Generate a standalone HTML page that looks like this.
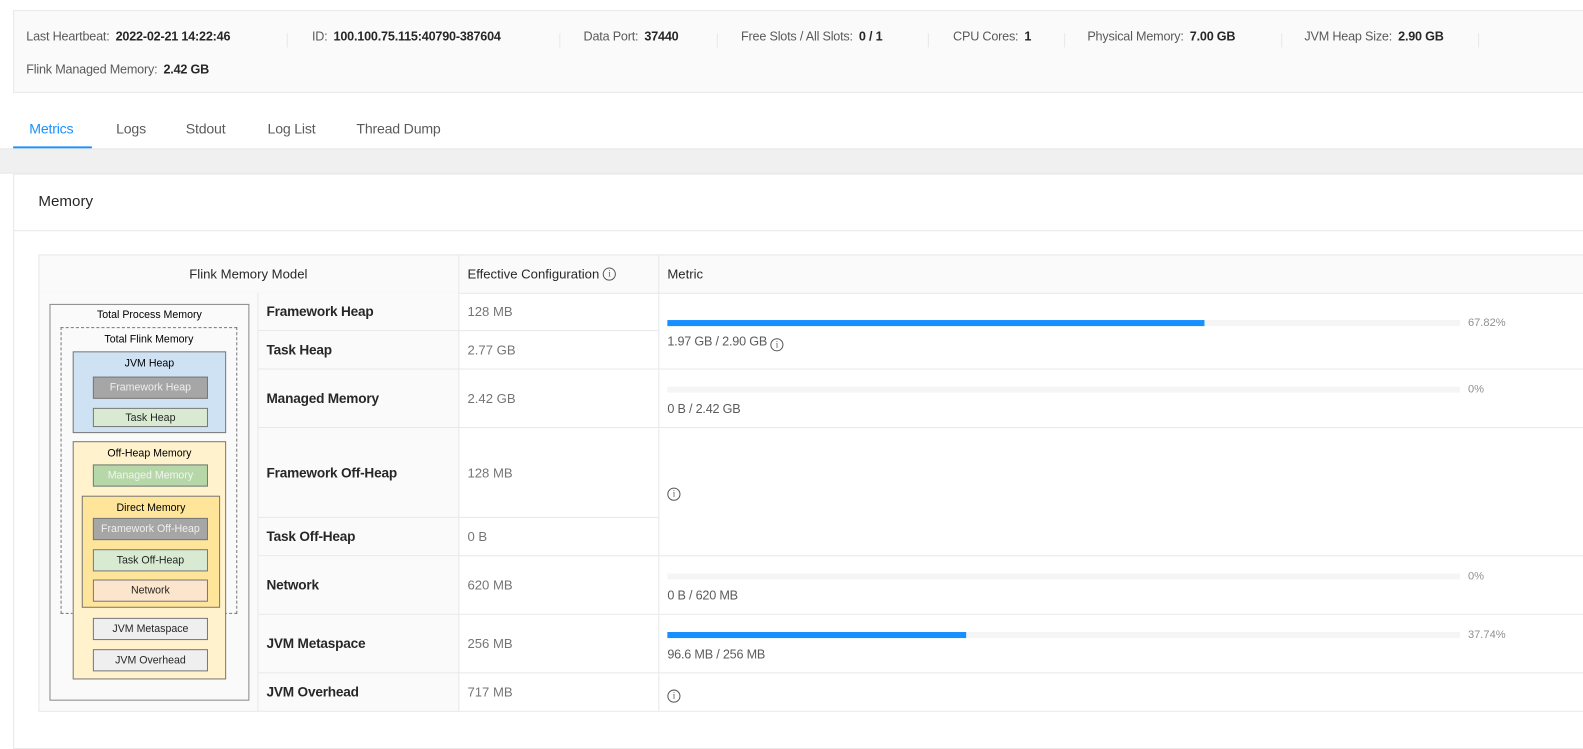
<!DOCTYPE html>
<html><head><meta charset="utf-8"><style>
*{box-sizing:border-box;margin:0;padding:0}
body{width:1583px;height:733px;overflow:hidden;background:#fff;font-family:"Liberation Sans",sans-serif;color:rgba(0,0,0,.85);position:relative;font-size:13px}
#w{position:absolute;left:0;top:0;width:1568px;height:726px;transform:scale(1.0096);transform-origin:0 0}
.a{position:absolute}
.hdr{left:13px;top:10px;width:1580px;height:82px;background:#fafafa;border:1px solid #e8e8e8}
.it{position:absolute;top:18px;font-size:12.5px;color:rgba(0,0,0,.65);white-space:nowrap;letter-spacing:-.2px}
.it b{color:rgba(0,0,0,.85);margin-left:6px}
.sep{position:absolute;top:22px;width:1px;height:14px;background:#e8e8e8}
.tab{position:absolute;top:119px;font-size:14px;color:rgba(0,0,0,.65);letter-spacing:-.2px}
.cell{position:absolute;border-bottom:1px solid #e8e8e8;border-right:1px solid #e8e8e8;display:flex;align-items:center;padding-left:8px}
.nm{background:#fafafa;font-weight:bold;font-size:13.5px;color:rgba(0,0,0,.85);letter-spacing:-.2px}
.cf{color:rgba(0,0,0,.55);font-size:13px}
.bx{position:absolute;text-align:center;font-size:10.5px;color:#000;font-family:"Liberation Sans",sans-serif}
.sb{position:absolute;left:92px;width:114px;height:22px;border:1px solid #777;font-size:10.5px;display:flex;align-items:center;justify-content:center;font-family:"Liberation Sans",sans-serif}
.bar{position:absolute;left:661px;width:785px;height:6px;background:#f5f5f5}
.bar i{position:absolute;left:0;top:0;height:6px;background:#1890ff}
.pct{position:absolute;left:1454px;font-size:11px;color:rgba(0,0,0,.45)}
.mt{position:absolute;left:661px;font-size:12.5px;color:rgba(0,0,0,.65);letter-spacing:-.2px}
.ic{display:inline-block;width:13px;height:13px;border:1.2px solid #555;border-radius:50%;font-size:9px;line-height:11px;text-align:center;color:#555;vertical-align:-2px;font-family:"Liberation Serif",serif}
</style></head><body><div id="w">
<div class="a hdr">
<div class="it" style="left:12px">Last Heartbeat:<b>2022-02-21 14:22:46</b></div>
<div class="sep" style="left:270px"></div>
<div class="it" style="left:295px">ID:<b>100.100.75.115:40790-387604</b></div>
<div class="sep" style="left:540px"></div>
<div class="it" style="left:564px">Data Port:<b>37440</b></div>
<div class="sep" style="left:696px"></div>
<div class="it" style="left:720px">Free Slots / All Slots:<b>0 / 1</b></div>
<div class="sep" style="left:905px"></div>
<div class="it" style="left:930px">CPU Cores:<b>1</b></div>
<div class="sep" style="left:1040px"></div>
<div class="it" style="left:1063px">Physical Memory:<b>7.00 GB</b></div>
<div class="sep" style="left:1255px"></div>
<div class="it" style="left:1278px">JVM Heap Size:<b>2.90 GB</b></div>
<div class="sep" style="left:1450px"></div>
<div class="it" style="left:12px;top:51px">Flink Managed Memory:<b>2.42 GB</b></div>
</div>
<div class="tab" style="left:29px;color:#1890ff">Metrics</div>
<div class="tab" style="left:115px">Logs</div>
<div class="tab" style="left:184px">Stdout</div>
<div class="tab" style="left:265px">Log List</div>
<div class="tab" style="left:353px">Thread Dump</div>
<div class="a" style="left:13px;top:145px;width:78px;height:2px;background:#1890ff"></div>
<div class="a" style="left:0;top:147px;width:1583px;height:25px;background:#f0f0f0;border-top:1px solid #e8e8e8;border-bottom:1px solid #e8e8e8"></div>
<div class="a" style="left:13px;top:172px;width:1580px;height:570px;border:1px solid #e8e8e8;background:#fff"></div>
<div class="a" style="left:38px;top:191px;font-size:15px;color:rgba(0,0,0,.85)">Memory</div>
<div class="a" style="left:14px;top:228px;width:1570px;height:1px;background:#e8e8e8"></div>

<div class="a" style="left:38px;top:252px;width:1545px;height:39px;background:#fafafa;border-top:1px solid #e8e8e8;border-left:1px solid #e8e8e8"></div>
<div class="cell" style="left:38px;top:252px;width:417px;height:39px;justify-content:center;padding:0;font-size:13px;border-top:1px solid #e8e8e8">Flink Memory Model</div>
<div class="cell" style="left:455px;top:252px;width:198px;height:39px;font-size:13px;border-top:1px solid #e8e8e8">Effective Configuration&nbsp;<span class="ic">i</span></div>
<div class="cell" style="left:653px;top:252px;width:930px;height:39px;font-size:13px;border-top:1px solid #e8e8e8;border-right:none">Metric</div>

<div class="cell" style="left:38px;top:290px;width:218px;height:415px;background:#fafafa;border-left:1px solid #e8e8e8"></div>
<div class="a" style="left:49px;top:301px;width:198px;height:393px;border:1px solid #888;background:#fafafa"></div>
<div class="bx" style="left:49px;top:306px;width:198px">Total Process Memory</div>
<div class="a" style="left:60px;top:324px;width:175px;height:284px;border:1px dashed #777"></div>
<div class="bx" style="left:60px;top:330px;width:175px">Total Flink Memory</div>
<div class="a" style="left:72px;top:348px;width:152px;height:81px;border:1px solid #777;background:#cfe2f3"></div>
<div class="bx" style="left:72px;top:354px;width:152px">JVM Heap</div>
<div class="sb" style="top:373px;background:#a6a6a6;color:#eee">Framework Heap</div>
<div class="sb" style="top:404px;height:19px;background:#d9ead3">Task Heap</div>
<div class="a" style="left:72px;top:437px;width:152px;height:236px;border:1px solid #777;background:#fff2cc"></div>
<div class="bx" style="left:72px;top:443px;width:152px">Off-Heap Memory</div>
<div class="sb" style="top:460px;background:#b6d7a8;color:#f4f4f4">Managed Memory</div>
<div class="a" style="left:81px;top:491px;width:137px;height:111px;border:1px solid #777;background:#ffe599"></div>
<div class="bx" style="left:81px;top:497px;width:137px">Direct Memory</div>
<div class="sb" style="top:513px;background:#a6a6a6;color:#eee">Framework Off-Heap</div>
<div class="sb" style="top:544px;background:#d9ead3">Task Off-Heap</div>
<div class="sb" style="top:574px;background:#fce5cd">Network</div>
<div class="sb" style="top:612px;background:#efefef">JVM Metaspace</div>
<div class="sb" style="top:643px;background:#efefef">JVM Overhead</div>

<div class="cell nm" style="left:256px;top:290px;width:199px;height:38px">Framework Heap</div>
<div class="cell cf" style="left:455px;top:290px;width:198px;height:38px">128 MB</div>
<div class="cell nm" style="left:256px;top:328px;width:199px;height:38px">Task Heap</div>
<div class="cell cf" style="left:455px;top:328px;width:198px;height:38px">2.77 GB</div>
<div class="cell nm" style="left:256px;top:366px;width:199px;height:58px">Managed Memory</div>
<div class="cell cf" style="left:455px;top:366px;width:198px;height:58px">2.42 GB</div>
<div class="cell nm" style="left:256px;top:424px;width:199px;height:89px">Framework Off-Heap</div>
<div class="cell cf" style="left:455px;top:424px;width:198px;height:89px">128 MB</div>
<div class="cell nm" style="left:256px;top:513px;width:199px;height:38px">Task Off-Heap</div>
<div class="cell cf" style="left:455px;top:513px;width:198px;height:38px">0 B</div>
<div class="cell nm" style="left:256px;top:551px;width:199px;height:58px">Network</div>
<div class="cell cf" style="left:455px;top:551px;width:198px;height:58px">620 MB</div>
<div class="cell nm" style="left:256px;top:609px;width:199px;height:58px">JVM Metaspace</div>
<div class="cell cf" style="left:455px;top:609px;width:198px;height:58px">256 MB</div>
<div class="cell nm" style="left:256px;top:667px;width:199px;height:38px">JVM Overhead</div>
<div class="cell cf" style="left:455px;top:667px;width:198px;height:38px">717 MB</div>

<div class="cell" style="left:653px;top:290px;width:930px;height:76px;border-right:none"></div>
<div class="cell" style="left:653px;top:366px;width:930px;height:58px;border-right:none"></div>
<div class="cell" style="left:653px;top:424px;width:930px;height:127px;border-right:none"></div>
<div class="cell" style="left:653px;top:551px;width:930px;height:58px;border-right:none"></div>
<div class="cell" style="left:653px;top:609px;width:930px;height:58px;border-right:none"></div>
<div class="cell" style="left:653px;top:667px;width:930px;height:38px;border-right:none"></div>

<div class="bar" style="top:317px"><i style="width:532px"></i></div><div class="pct" style="top:314px">67.82%</div>
<div class="mt" style="top:331px">1.97 GB / 2.90 GB <span class="ic">i</span></div>
<div class="bar" style="top:383px"></div><div class="pct" style="top:380px">0%</div>
<div class="mt" style="top:398px">0 B / 2.42 GB</div>
<div class="mt" style="top:479px"><span class="ic">i</span></div>
<div class="bar" style="top:568px"></div><div class="pct" style="top:565px">0%</div>
<div class="mt" style="top:583px">0 B / 620 MB</div>
<div class="bar" style="top:626px"><i style="width:296px"></i></div><div class="pct" style="top:623px">37.74%</div>
<div class="mt" style="top:641px">96.6 MB / 256 MB</div>
<div class="mt" style="top:679px"><span class="ic">i</span></div>
</div></body></html>
